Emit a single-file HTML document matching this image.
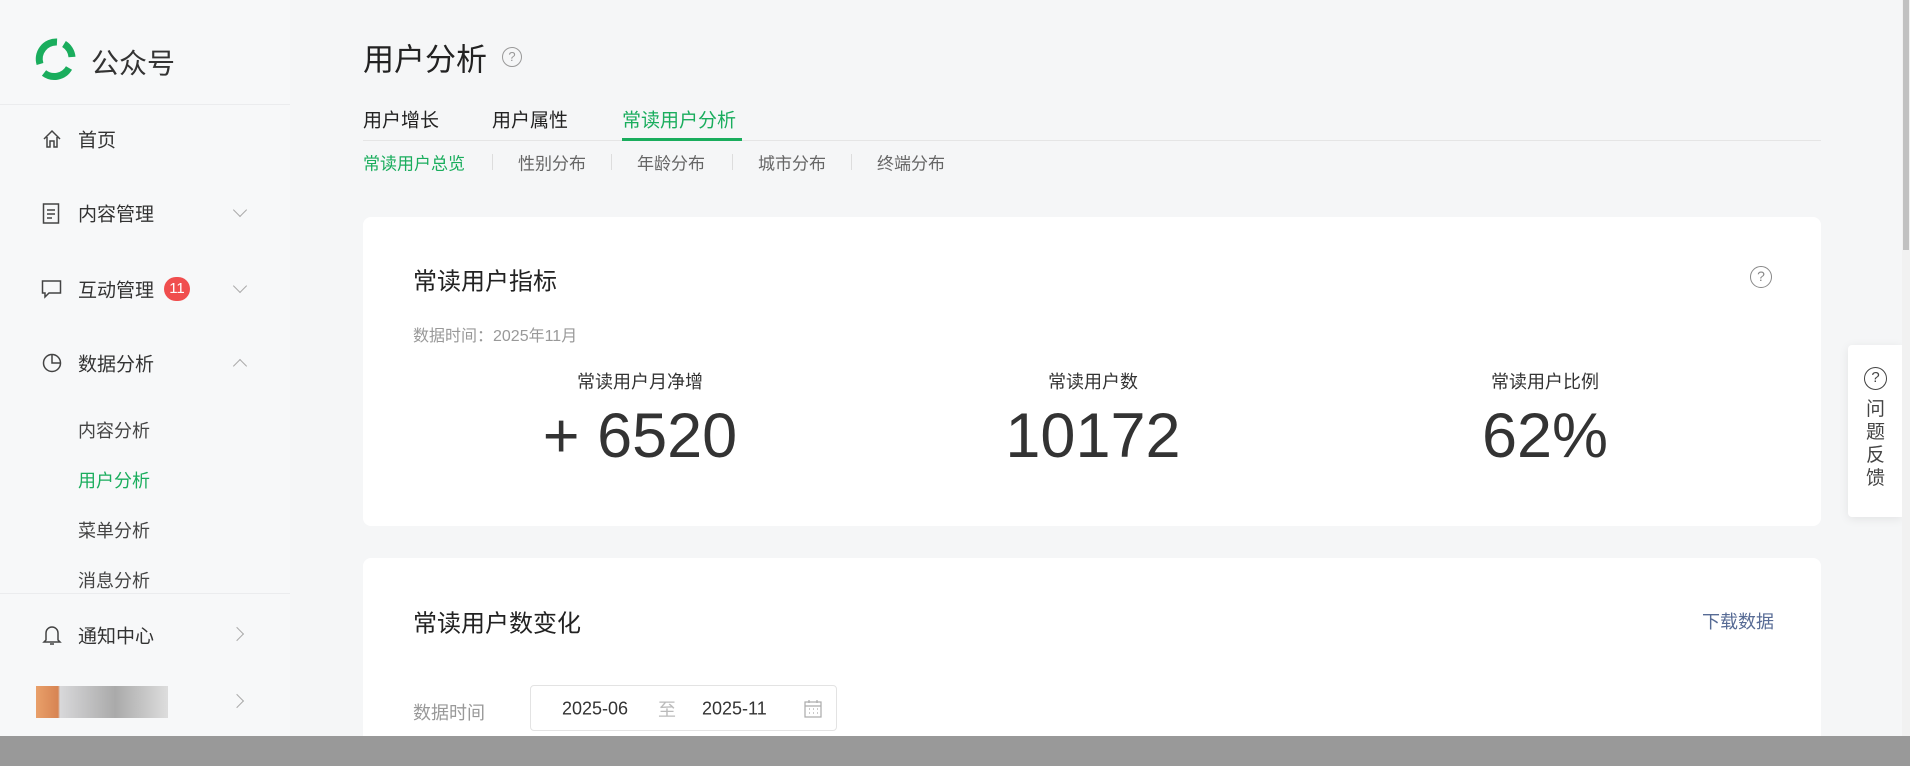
<!DOCTYPE html>
<html><head><meta charset="utf-8"><style>
*{margin:0;padding:0;box-sizing:border-box}
html,body{width:1910px;height:766px;overflow:hidden}
body{background:#f5f6f7;font-family:"Liberation Sans","Noto Sans CJK SC",sans-serif;color:#222;position:relative}
.abs{position:absolute;white-space:nowrap}
.side{position:absolute;left:0;top:0;width:290px;height:766px;background:#f7f8f9}
.hr{position:absolute;left:0;width:290px;height:1px;background:#ebecee}
.nav{font-size:19px;color:#333;transform:translateY(-50%)}
.sub{font-size:18px;color:#444;transform:translateY(-50%)}
.chev{position:absolute;width:10px;height:10px;border-right:1.5px solid #aaa;border-bottom:1.5px solid #aaa}
.card{position:absolute;left:363px;width:1458px;background:#fff;border-radius:8px}
.c{transform:translate(-50%,-50%);text-align:center}
.m{transform:translateY(-50%)}
</style></head><body>
<div class="side">
<svg class="abs" style="left:33px;top:37px" width="44" height="44" viewBox="0 0 44 44"><g fill="none" stroke="#1aad5d" stroke-width="7"><path d="M24 5 A17 17 0 0 0 7 27"/><path d="M11 36 A17 17 0 0 0 36 31"/><path d="M39 20 A17 17 0 0 0 31 7"/></g></svg>
<div class="abs" style="left:91px;top:42px;font-size:28px;color:#333">公众号</div>
<div class="hr" style="top:104px"></div>
<svg class="abs" style="left:42px;top:129px" width="20" height="20" viewBox="0 0 20 20" fill="none" stroke="#444" stroke-width="1.5"><path d="M2 10 L10 2 L18 10 M5 8 V18 H8 V12 H12 V18 H15 V8"/></svg>
<div class="abs nav" style="left:78px;top:139px">首页</div>
<svg class="abs" style="left:42px;top:203px" width="18" height="21" viewBox="0 0 18 21" fill="none" stroke="#444" stroke-width="1.5"><rect x="1.5" y="1" width="15" height="19"/><path d="M5 7H13M5 11H13M5 15H10"/></svg>
<div class="abs nav" style="left:78px;top:213px">内容管理</div>
<div class="chev" style="left:235px;top:205px;transform:rotate(45deg)"></div>
<svg class="abs" style="left:41px;top:279px" width="21" height="20" viewBox="0 0 21 20" fill="none" stroke="#444" stroke-width="1.5"><path d="M1.5 2H19.5V14H8L4 18V14H1.5Z"/></svg>
<div class="abs nav" style="left:78px;top:289px">互动管理</div>
<div class="abs" style="left:164px;top:277px;width:26px;height:24px;border-radius:12px;background:#f04e4e;color:#fff;font-size:15px;text-align:center;line-height:24px">11</div>
<div class="chev" style="left:235px;top:281px;transform:rotate(45deg)"></div>
<svg class="abs" style="left:42px;top:353px" width="20" height="20" viewBox="0 0 20 20" fill="none" stroke="#444" stroke-width="1.5"><circle cx="10" cy="10" r="8.5"/><path d="M10 1.5V10H18.5"/></svg>
<div class="abs nav" style="left:78px;top:363px">数据分析</div>
<div class="chev" style="left:235px;top:361px;transform:rotate(225deg)"></div>
<div class="abs sub" style="left:78px;top:430px">内容分析</div>
<div class="abs sub" style="left:78px;top:480px;color:#1aad5d">用户分析</div>
<div class="abs sub" style="left:78px;top:530px">菜单分析</div>
<div class="abs sub" style="left:78px;top:580px">消息分析</div>
<div class="hr" style="top:593px"></div>
<svg class="abs" style="left:42px;top:624px" width="20" height="22" viewBox="0 0 20 22" fill="none" stroke="#444" stroke-width="1.5"><path d="M4 16V9A6 6 0 0 1 16 9V16L18 18H2Z M8 20H12"/></svg>
<div class="abs nav" style="left:78px;top:635px">通知中心</div>
<div class="chev" style="left:232px;top:629px;transform:rotate(-45deg)"></div>
<div class="abs" style="left:36px;top:686px;width:132px;height:32px;background:linear-gradient(90deg,#e9a06a 0,#d78453 22px,#d8d8da 24px,#aaa 60%,#ddd)"></div>
<div class="chev" style="left:232px;top:696px;transform:rotate(-45deg)"></div>
</div>

<div class="abs m" style="left:363px;top:57px;font-size:31px;color:#222">用户分析</div>
<div class="abs" style="left:502px;top:47px;width:20px;height:20px;border:1.5px solid #999;border-radius:50%;font-size:13px;color:#999;text-align:center;line-height:17px">?</div>
<div class="abs m" style="left:363px;top:119px;font-size:19px">用户增长</div>
<div class="abs m" style="left:492px;top:119px;font-size:19px">用户属性</div>
<div class="abs m" style="left:622px;top:119px;font-size:19px;color:#1aad5d">常读用户分析</div>
<div class="abs" style="left:363px;top:140px;width:1458px;height:1px;background:#e5e5e5"></div>
<div class="abs" style="left:622px;top:138px;width:120px;height:3px;background:#1aad5d"></div>
<div class="abs m" style="left:363px;top:162px;font-size:17px;color:#1aad5d">常读用户总览</div>
<div class="abs m" style="left:518px;top:162px;font-size:17px;color:#666">性别分布</div>
<div class="abs m" style="left:637px;top:162px;font-size:17px;color:#666">年龄分布</div>
<div class="abs m" style="left:758px;top:162px;font-size:17px;color:#666">城市分布</div>
<div class="abs m" style="left:877px;top:162px;font-size:17px;color:#666">终端分布</div>
<div class="abs" style="left:492px;top:154px;width:1px;height:16px;background:#ddd"></div>
<div class="abs" style="left:611px;top:154px;width:1px;height:16px;background:#ddd"></div>
<div class="abs" style="left:732px;top:154px;width:1px;height:16px;background:#ddd"></div>
<div class="abs" style="left:851px;top:154px;width:1px;height:16px;background:#ddd"></div>

<div class="card" style="top:217px;height:309px"></div>
<div class="abs m" style="left:413px;top:279px;font-size:24px">常读用户指标</div>
<div class="abs" style="left:1750px;top:266px;width:22px;height:22px;border:1.5px solid #888;border-radius:50%;font-size:14px;color:#888;text-align:center;line-height:19px">?</div>
<div class="abs m" style="left:413px;top:334px;font-size:16px;color:#999">数据时间：2025年11月</div>
<div class="abs c" style="left:640px;top:381px;font-size:18px;color:#333">常读用户月净增</div>
<div class="abs c" style="left:1093px;top:381px;font-size:18px;color:#333">常读用户数</div>
<div class="abs c" style="left:1545px;top:381px;font-size:18px;color:#333">常读用户比例</div>
<div class="abs c" style="left:640px;top:436px;font-size:63px;color:#333">+ 6520</div>
<div class="abs c" style="left:1093px;top:436px;font-size:63px;color:#333">10172</div>
<div class="abs c" style="left:1545px;top:436px;font-size:63px;color:#333">62%</div>

<div class="card" style="top:558px;height:208px;border-radius:8px 8px 0 0"></div>
<div class="abs m" style="left:413px;top:621px;font-size:24px">常读用户数变化</div>
<div class="abs m" style="left:1702px;top:621px;font-size:18px;color:#576b95">下载数据</div>
<div class="abs m" style="left:413px;top:712px;font-size:18px;color:#999">数据时间</div>
<div class="abs" style="left:530px;top:685px;width:307px;height:46px;border:1px solid #e3e3e3;border-radius:4px"></div>
<div class="abs m" style="left:562px;top:709px;font-size:18px;color:#333">2025-06</div>
<div class="abs m" style="left:658px;top:709px;font-size:18px;color:#bbb">至</div>
<div class="abs m" style="left:702px;top:709px;font-size:18px;color:#333">2025-11</div>
<svg class="abs" style="left:804px;top:700px" width="18" height="18" viewBox="0 0 18 18" fill="none" stroke="#aaa" stroke-width="1.2"><rect x="1" y="2" width="16" height="15"/><path d="M1 6H17M5 0V3M13 0V3M5 9H6M9 9H10M13 9H14M5 13H6M9 13H10M13 13H14"/></svg>

<div class="abs" style="left:1848px;top:345px;width:54px;height:172px;background:#fff;border-radius:4px 0 0 4px;box-shadow:0 2px 10px rgba(0,0,0,.08)"></div>
<div class="abs" style="left:1864px;top:367px;width:23px;height:23px;border:1.5px solid #444;border-radius:50%;font-size:15px;color:#444;text-align:center;line-height:20px">?</div>
<div class="abs" style="left:1866px;top:398px;width:20px;font-size:19px;color:#444;line-height:23px;white-space:normal">问题反馈</div>
<div class="abs" style="left:1902px;top:0;width:8px;height:766px;background:#f1f1f1"></div>
<div class="abs" style="left:1903px;top:0;width:6px;height:250px;background:#c1c1c1"></div>
<div class="abs" style="left:0;top:736px;width:1910px;height:30px;background:#999"></div>
</body></html>
